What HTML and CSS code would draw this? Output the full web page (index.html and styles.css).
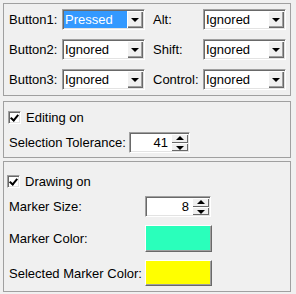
FILE: index.html
```html
<!DOCTYPE html>
<html lang="en">
<head>
    <meta charset="UTF-8">
    <title>Mouse and Drawing Options</title>
    <link rel="stylesheet" href="styles.css">
</head>
<body>

    <div class="panel modifiers">
        <span class="label">Button1:</span>
        <div class="combo"><span class="value selected">Pressed</span><span class="drop"></span></div>
        <span class="label right">Alt:</span>
        <div class="combo"><span class="value">Ignored</span><span class="drop"></span></div>

        <span class="label">Button2:</span>
        <div class="combo"><span class="value">Ignored</span><span class="drop"></span></div>
        <span class="label right">Shift:</span>
        <div class="combo"><span class="value">Ignored</span><span class="drop"></span></div>

        <span class="label">Button3:</span>
        <div class="combo"><span class="value">Ignored</span><span class="drop"></span></div>
        <span class="label right">Control:</span>
        <div class="combo"><span class="value">Ignored</span><span class="drop"></span></div>
    </div>

    <div class="panel editing">
        <label class="check"><span class="box"></span>Editing on</label>
        <div class="row">
            <span class="label tol">Selection Tolerance:</span>
            <div class="spin tol-spin"><span class="num">41</span><span class="arrows"><span class="up"></span><span class="down"></span></span></div>
        </div>
    </div>

    <div class="panel drawing">
        <label class="check"><span class="box"></span>Drawing on</label>
        <div class="grid">
            <span class="label">Marker Size:</span>
            <div class="spin"><span class="num">8</span><span class="arrows"><span class="up"></span><span class="down"></span></span></div>
            <span class="label">Marker Color:</span>
            <div class="swatch teal"></div>
            <span class="label">Selected Marker Color:</span>
            <div class="swatch yellow small"></div>
        </div>
    </div>

</body>
</html>
```

FILE: styles.css
```css
body {
    margin: 0;
    padding: 3px 5px 0 3px;
    background: #f0f0f0;
    font-family: 'Liberation Sans', Arial, sans-serif;
    font-size: 13px;
    color: #000;
}

.panel {
    border: 1px solid #a0a0a0;
}

.label {
    display: flex;
    align-items: center;
    white-space: nowrap;
}

/* mouse modifiers */
.modifiers {
    display: grid;
    grid-template-columns: 53px 83px 58px 83px;
    grid-auto-rows: 21px;
    row-gap: 9px;
    padding: 5px 4px 5px 5px;
}

.label.right {
    padding-left: 8px;
}

.combo {
    display: flex;
    background: #fff;
    border: 1px solid;
    border-color: #a0a0a0 #fff #fff #a0a0a0;
    box-shadow: inset 1px 1px 0 #696969, inset -1px -1px 0 #e3e3e3;
    padding: 1px;
}

.combo .value {
    flex: 1;
    display: flex;
    align-items: center;
    padding-left: 1px;
}

.combo .value.selected {
    background: #3399ff;
    color: #fff;
}

.drop {
    width: 16px;
    position: relative;
    background: #f0f0f0;
    box-shadow: inset 1px 1px 0 #fff, inset -1px -1px 0 #696969, inset -2px -2px 0 #a0a0a0;
}

.drop::after {
    content: "";
    position: absolute;
    left: 4px;
    top: 7px;
    border-left: 4px solid transparent;
    border-right: 4px solid transparent;
    border-top: 4px solid #000;
}

/* checkboxes */
.check {
    display: flex;
    align-items: center;
    gap: 5px;
    height: 13px;
}

.box {
    width: 13px;
    height: 13px;
    box-sizing: border-box;
    background: #fff;
    border: 1px solid;
    border-color: #a0a0a0 #fff #fff #a0a0a0;
    box-shadow: inset 1px 1px 0 #696969, inset -1px -1px 0 #e3e3e3;
    position: relative;
}

.box::after {
    content: "";
    position: absolute;
    left: 2px;
    top: 1px;
    width: 3px;
    height: 6px;
    border-right: 2px solid #000;
    border-bottom: 2px solid #000;
    transform: translate(1px, 0) rotate(40deg);
}

/* spinners */
.spin {
    display: flex;
    height: 21px;
    box-sizing: border-box;
    background: #fff;
    border: 1px solid;
    border-color: #a0a0a0 #fff #fff #a0a0a0;
    box-shadow: inset 1px 1px 0 #696969, inset -1px -1px 0 #e3e3e3;
    padding: 1px;
}

.spin .num {
    flex: 1;
    display: flex;
    align-items: center;
    justify-content: flex-end;
    padding-right: 3px;
}

.arrows {
    width: 17px;
    display: flex;
    flex-direction: column;
}

.arrows span {
    flex: 1;
    position: relative;
    background: #f0f0f0;
    box-shadow: inset 1px 1px 0 #fff, inset -1px -1px 0 #696969;
}

.arrows .up::after,
.arrows .down::after {
    content: "";
    position: absolute;
    left: 5px;
    border-left: 4px solid transparent;
    border-right: 4px solid transparent;
}

.arrows .up::after {
    top: 2px;
    border-bottom: 4px solid #000;
}

.arrows .down::after {
    top: 3px;
    border-top: 4px solid #000;
}

.editing {
    margin-top: 5px;
    padding: 9px 4px 4px 4px;
}

.editing .row {
    display: flex;
    margin-top: 8px;
    padding-left: 1px;
}

.tol {
    width: 120px;
}

.tol-spin {
    width: 61px;
}

/* drawing */
.drawing {
    margin-top: 3px;
    padding: 13px 4px 5px 3px;
}

.drawing .grid {
    display: grid;
    grid-template-columns: 136px 66px;
    grid-template-rows: 21px 27px 26px;
    row-gap: 8px;
    margin-top: 8px;
    padding-left: 2px;
}

.swatch {
    border: 1px solid;
    border-color: #fff #696969 #696969 #fff;
    box-shadow: inset -1px -1px 0 #a0a0a0;
    width: 67px;
    box-sizing: border-box;
}

.teal {
    background: #2affbb;
}

.yellow {
    background: #ffff00;
}
```
